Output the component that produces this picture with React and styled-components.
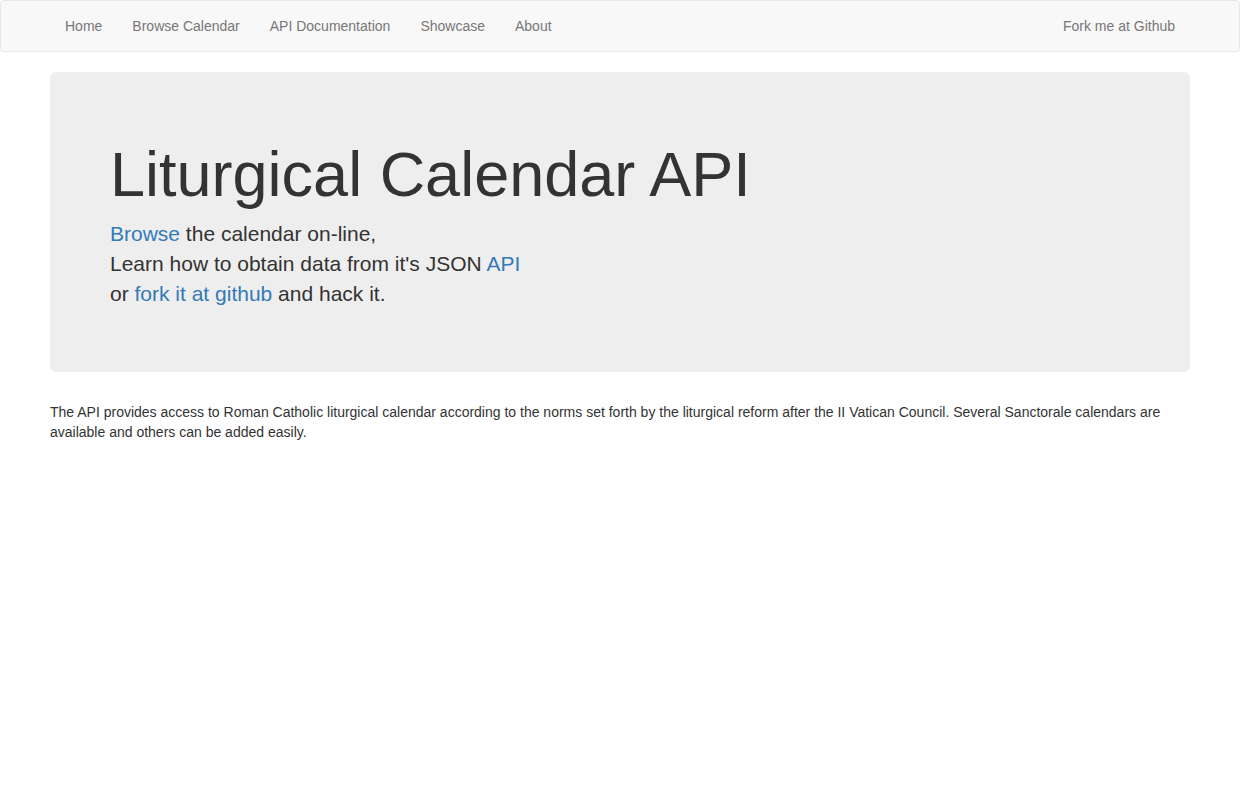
import React from "react";
import styled, { createGlobalStyle } from "styled-components";

const GlobalStyle = createGlobalStyle`
  * { box-sizing: border-box; }
  body {
    margin: 0;
    font-family: "Liberation Sans", Arial, sans-serif;
    font-size: 14px;
    line-height: 1.42857143;
    color: #333;
    background: #fff;
  }
  a { color: #337ab7; text-decoration: none; }
`;

const Navbar = styled.nav`
  background: #f8f8f8;
  border: 1px solid #e7e7e7;
  border-radius: 4px;
  min-height: 50px;
  margin-bottom: 20px;
`;

const Container = styled.div`
  width: 1170px;
  margin: 0 auto;
  padding: 0 15px;
`;

const NavInner = styled(Container)`
  display: flex;
  justify-content: space-between;
`;

const NavList = styled.ul`
  display: flex;
  list-style: none;
  margin: 0;
  padding: 0;
`;

const NavLink = styled.a`
  display: block;
  padding: 15px;
  line-height: 20px;
  color: #777;
`;

const Jumbotron = styled.div`
  background: #eee;
  border-radius: 6px;
  padding: 48px 60px;
  margin-bottom: 30px;
`;

const Title = styled.h1`
  font-size: 63px;
  font-weight: 500;
  line-height: 1.1;
  margin: 20px 0 10px;
  color: #333;
`;

const Lead = styled.p`
  font-size: 21px;
  font-weight: 200;
  margin: 0 0 15px;
`;

const Text = styled.p`
  margin: 0 0 10px;
`;

const links = ["Home", "Browse Calendar", "API Documentation", "Showcase", "About"];

export default function App() {
  return (
    <>
      <GlobalStyle />
      <Navbar>
        <NavInner>
          <NavList>
            {links.map((l) => (
              <li key={l}>
                <NavLink href="#">{l}</NavLink>
              </li>
            ))}
          </NavList>
          <NavList>
            <li>
              <NavLink href="#">Fork me at Github</NavLink>
            </li>
          </NavList>
        </NavInner>
      </Navbar>
      <Container>
        <Jumbotron>
          <Title>Liturgical Calendar API</Title>
          <Lead>
            <a href="#">Browse</a> the calendar on-line,
            <br />
            Learn how to obtain data from it's JSON <a href="#">API</a>
            <br />
            or <a href="#">fork it at github</a> and hack it.
          </Lead>
        </Jumbotron>
        <Text>
          The API provides access to Roman Catholic liturgical calendar according to the norms set
          forth by the liturgical reform after the II Vatican Council. Several Sanctorale calendars
          are available and others can be added easily.
        </Text>
      </Container>
    </>
  );
}
